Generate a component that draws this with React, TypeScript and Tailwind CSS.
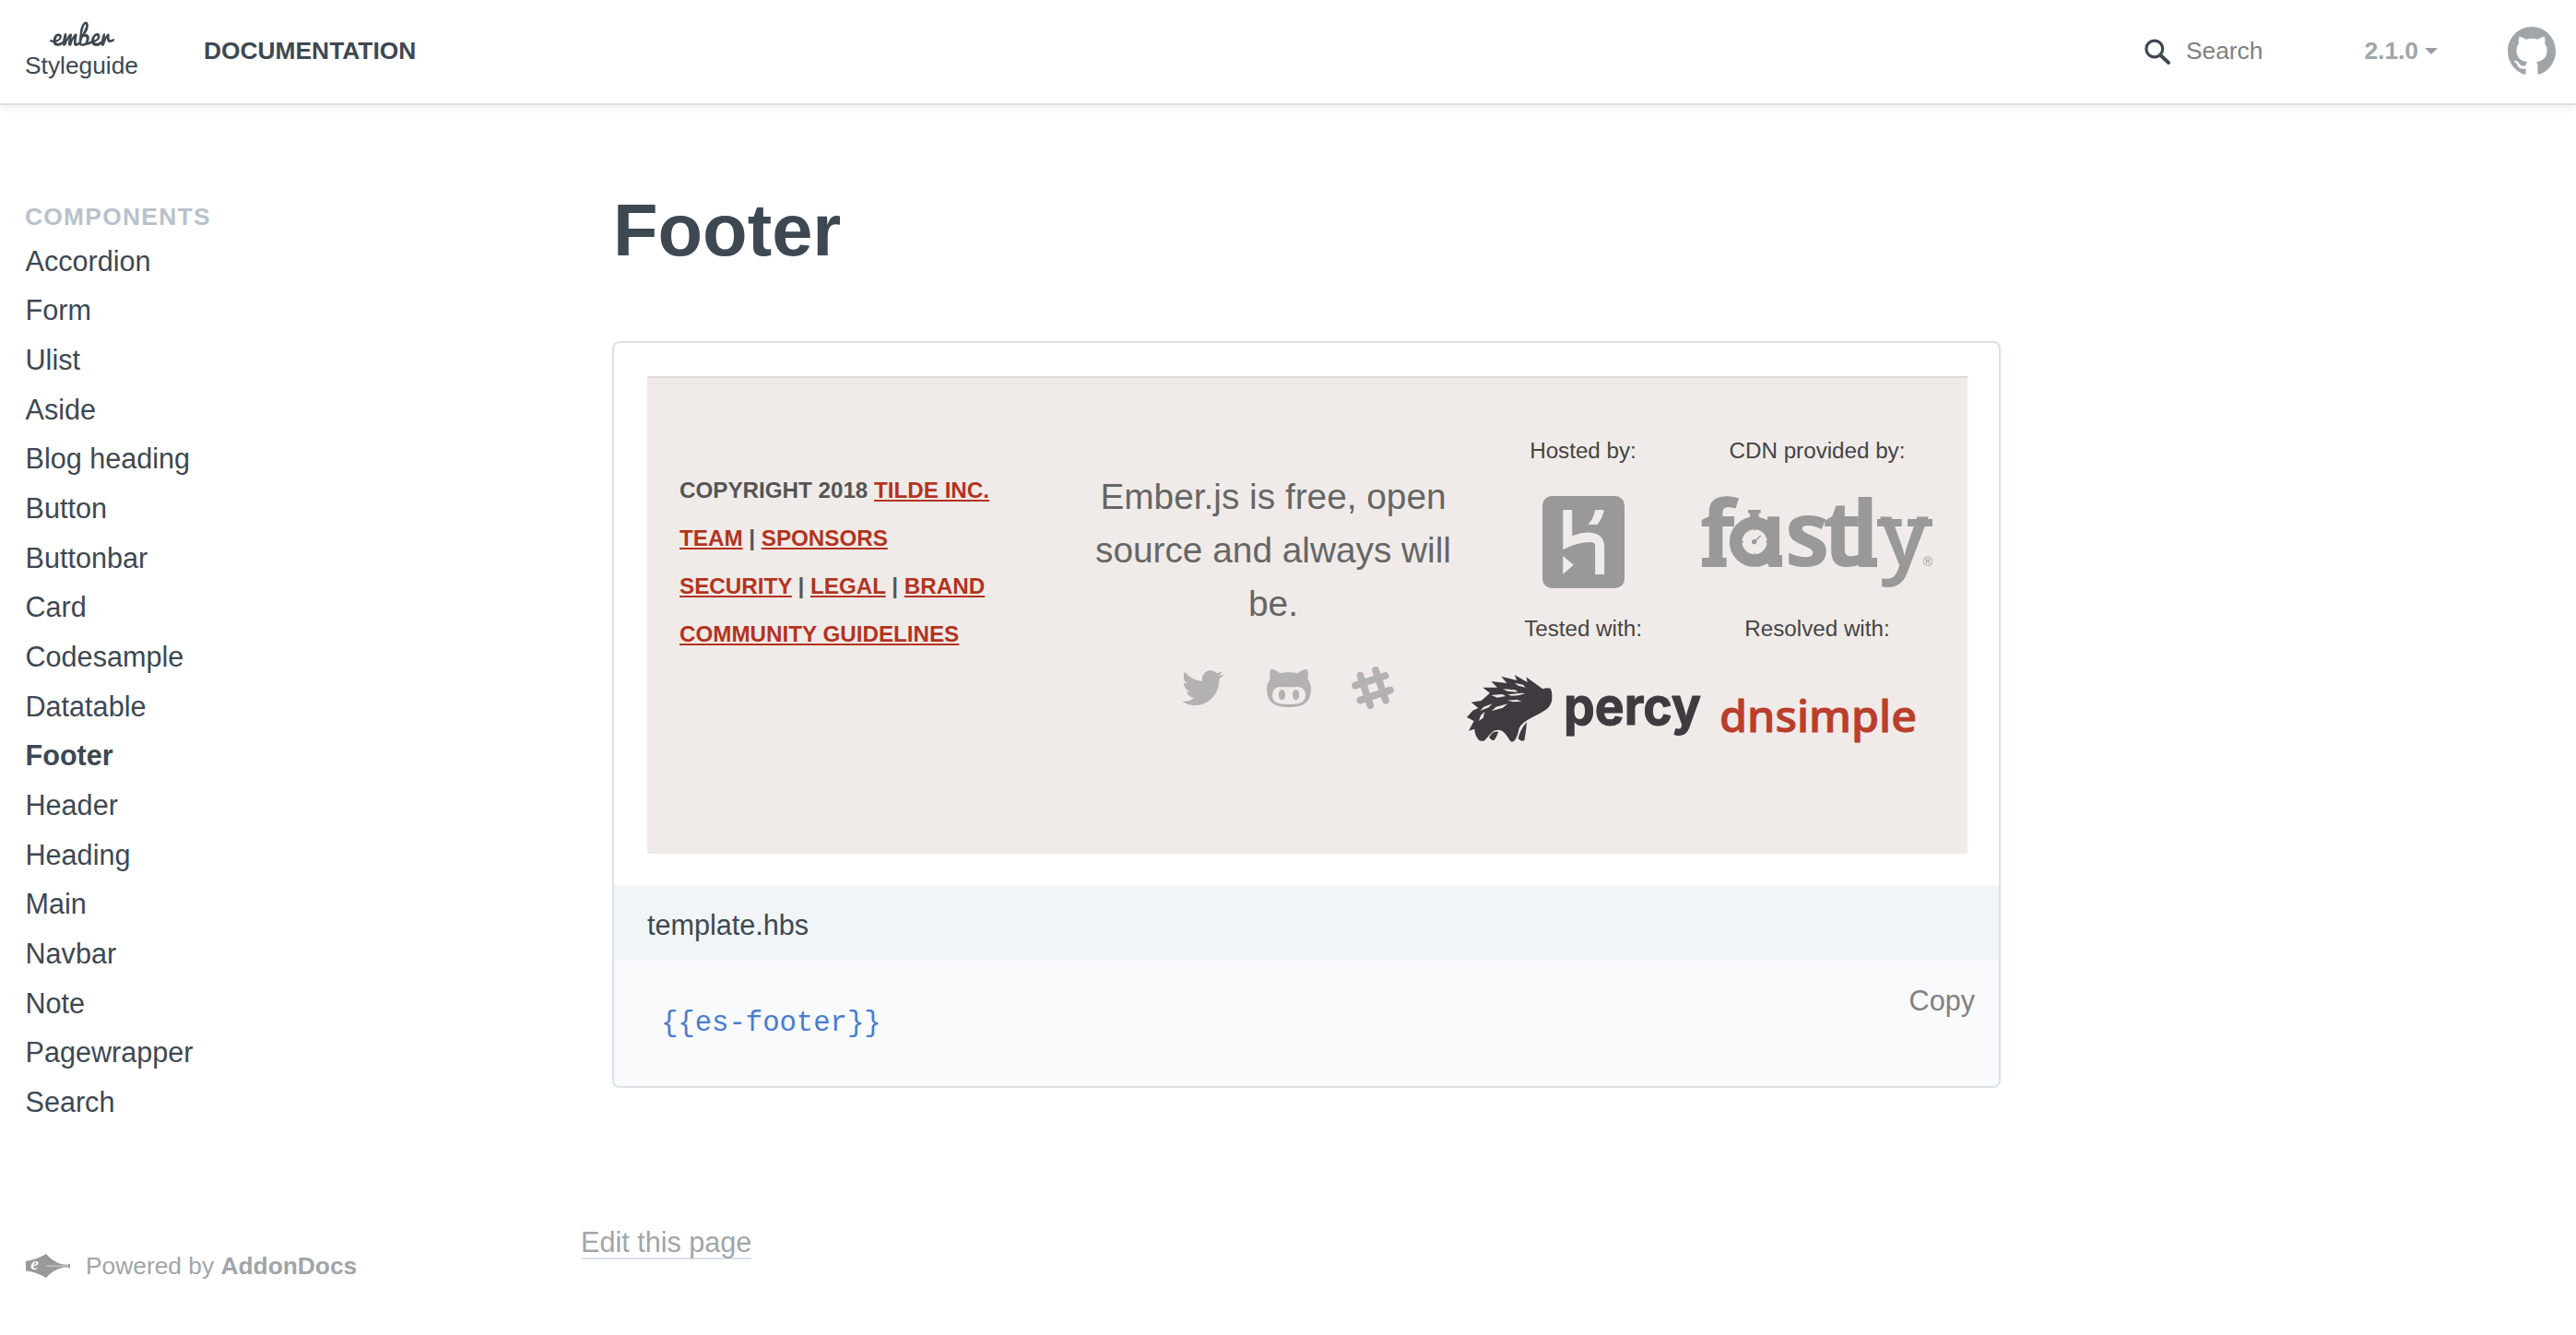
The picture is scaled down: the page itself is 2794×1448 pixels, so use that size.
import React from "react";
import { FaEmber } from "react-icons/fa";

const components = [
  "Accordion", "Form", "Ulist", "Aside", "Blog heading", "Button", "Buttonbar", "Card", "Codesample",
  "Datatable", "Footer", "Header", "Heading", "Main", "Navbar", "Note", "Pagewrapper", "Search",
];

function GithubMark() {
  return (
    <svg viewBox="0 0 16 16" className="h-[53px] w-[52px] fill-[#a0a5aa]" preserveAspectRatio="none">
      <path d="M8 0C3.58 0 0 3.58 0 8c0 3.54 2.29 6.53 5.47 7.59.4.07.55-.17.55-.38 0-.19-.01-.82-.01-1.49-2.01.37-2.53-.49-2.69-.94-.09-.23-.48-.94-.82-1.13-.28-.15-.68-.52-.01-.53.63-.01 1.08.58 1.23.82.72 1.21 1.87.87 2.33.66.07-.52.28-.87.51-1.07-1.78-.2-3.64-.89-3.64-3.95 0-.87.31-1.59.82-2.15-.08-.2-.36-1.02.08-2.12 0 0 .67-.21 2.2.82.64-.18 1.32-.27 2-.27.68 0 1.36.09 2 .27 1.53-1.04 2.2-.82 2.2-.82.44 1.1.16 1.92.08 2.12.51.56.82 1.27.82 2.15 0 3.07-1.87 3.75-3.65 3.95.29.25.54.73.54 1.48 0 1.07-.01 1.93-.01 2.2 0 .21.15.46.55.38A8.013 8.013 0 0016 8c0-4.42-3.58-8-8-8z" />
    </svg>
  );
}

function Header() {
  return (
    <header className="flex h-[114px] items-center border-b-2 border-[#dae1e7] pr-[22px] pb-0.5 pl-[27px] text-[26.35px] leading-[30px] text-[#3d4852] shadow-[0_4px_8px_rgba(0,0,0,0.05)]">
      <div className="flex flex-col items-center">
        <div className="flex h-[26px] w-[70px] items-start justify-center">
          <FaEmber className="-mt-2.5 h-14 w-[70px] shrink-0" />
        </div>
        <div className="mt-[5px]">Styleguide</div>
      </div>
      <div className="ml-[71px] font-bold">DOCUMENTATION</div>
      <div className="ml-auto flex items-center">
        <svg viewBox="0 0 28 28" className="mt-0.5 size-7 fill-none stroke-[#3d4852]">
          <circle cx="10.8" cy="11" r="8.9" strokeWidth="3.2" />
          <path d="M17 17.5 26 26" strokeWidth="3.8" strokeLinecap="round" />
        </svg>
        <div className="ml-[17px] text-[#808080]">Search</div>
        <div className="ml-[110px] font-bold text-[#a0a5aa]">2.1.0</div>
        <svg viewBox="0 0 14 7" className="ml-[7px] h-[7px] w-3.5 fill-[#999ca1]">
          <path d="M0 0H14L7 7Z" />
        </svg>
        <div className="ml-[76px]"><GithubMark /></div>
      </div>
    </header>
  );
}

function Sidebar() {
  return (
    <aside className="w-[630px] shrink-0 pt-[103px] pl-[27px] text-[#3d4852]">
      <div className="text-[26.35px] leading-9 font-bold tracking-[1.3px] text-[#b8c2cc]">COMPONENTS</div>
      <ul className="mt-[3.6px] pl-[0.5px] text-[30.6px] leading-[53.67px]">
        {components.map((name) => (
          <li key={name} className={name === "Footer" ? "font-bold" : ""}>{name}</li>
        ))}
      </ul>
      <div className="mt-[135px] flex h-[30px] items-center pl-px text-[26.35px] leading-[30px] text-[#a0a5aa]">
        <svg viewBox="24 41 144 79" className="mr-[17px] h-[26px] w-12" preserveAspectRatio="none">
          <path d="M24 65Q60 60 90 41Q112 68 145 76L162 77L163 74H168V88H163L162 85L145 86Q112 94 90 120Q60 100 24 97Z" className="fill-[#999999]" />
          <path d="M91 81H164" className="stroke-[#d4d4d4]" strokeWidth="3" />
          <text x="40" y="94" className="fill-white font-['Liberation_Serif',serif] text-[58px] font-bold italic">e</text>
        </svg>
        <span>Powered by <b>AddonDocs</b></span>
      </div>
    </aside>
  );
}

function Link({ children }: { children: React.ReactNode }) {
  return (
    <a className="text-[#b3331d] underline decoration-2 underline-offset-[2px]">{children}</a>
  );
}

function HerokuLogo() {
  return (
    <svg viewBox="294 234 232 300" className="h-[100px] w-[89px]" preserveAspectRatio="none">
      <rect x="294" y="234" width="232" height="300" rx="26" ry="30" className="fill-[#999999]" />
      <g className="fill-[#f0ebe9]">
        <path d="M352 279H378V364C400 354 418 352 430 353C455 355 469 372 469 400V489H443V398Q443 384 430 384C400 384 372 396 352 409Z" />
        <path d="M443 279H468Q465 305 449 327H423Q440 305 443 279Z" />
        <path d="M352 429 382 458 352 488Z" />
      </g>
    </svg>
  );
}

function FastlyLogo() {
  return (
    <svg viewBox="48 57 750 300" className="h-[100px] w-[250px] overflow-visible fill-[#999999]">
      <g className="font-['Open_Sans',sans-serif] text-[294px] font-bold">
        <text x="41" y="282">f</text>
        <text x="317 441 534" y="282">stl</text>
        <text x="627" y="282" textLength="158" lengthAdjust="spacingAndGlyphs" className="font-semibold">y</text>
      </g>
      <path d="M48 255H128V285H48ZM560 255H618V285H560ZM618 129H698V153H618ZM717 129H798V153H717Z" />
      <rect x="198" y="99" width="41" height="11" />
      <path d="M204 109H233V130H204Z" />
      <circle cx="219" cy="203" r="61" className="fill-[#f0ebe9] stroke-[#999999]" strokeWidth="41" />
      <path d="M261 121H300V246H309V285H267L259 270V232Q268 203 259 174Z" />
      <circle cx="218" cy="203" r="8" />
      <path d="M218 203 239 183" className="stroke-[#999999]" strokeWidth="4" />
      <path d="M219 161V167M219 239V245M177 203H183M255 203H261" className="stroke-[#999999]" strokeWidth="4" />
      <text x="767" y="283" className="font-['Liberation_Sans',sans-serif] text-[42px]">®</text>
    </svg>
  );
}

function PercyLogo() {
  return (
    <svg viewBox="1590 700 254 110" className="h-[110px] w-[254px] overflow-visible fill-[#3f3a40]">
      <g transform="translate(1580 700) scale(.33333)">
        <path d="M305 140Q311 150 310 168Q311 190 296 205Q280 218 246 234Q210 252 203 270C200 285 196 300 188 310Q180 318 172 308C160 288 150 275 135 275C115 275 105 295 92 308Q80 316 70 306Q58 290 58 272L39 278L56 246L33 234L52 212L70 204L47 185L80 180L108 155L85 137L132 137L112 117L163 123L145 101L196 114L188 96L230 120L226 103L280 142Q292 137 305 140Z" />
        <path d="M136 281C118 278 110 290 106 300Q113 311 122 308Q130 298 136 281ZM228 250C213 265 204 285 200 304Q212 315 220 309Q225 285 228 250Z" />
        <g className="fill-[#f0ebe9]">
          <path d="M188 122 216 128 224 137 200 131ZM150 142 190 145 200 152 165 149ZM112 162 148 159 160 165 132 170ZM166 160 212 155 222 157 200 163 178 164ZM164 179 196 177 212 182 184 184ZM76 213 88 200 116 190 104 202ZM114 213 128 200 166 190 150 203ZM72 246 78 228 91 216 86 236Z" />
        </g>
      </g>
      <text x="1696" y="785.5" textLength="149" lengthAdjust="spacingAndGlyphs" className="stroke-[#3f3a40] font-['Inter',sans-serif] text-[56px] font-bold" strokeLinejoin="round">percy</text>
    </svg>
  );
}

function DnsimpleLogo() {
  return (
    <svg viewBox="1844 700 254 110" className="h-[110px] w-[254px] overflow-visible">
      <text x="1865" y="793.5" textLength="214" lengthAdjust="spacingAndGlyphs" className="fill-[#ba3e2b] stroke-[#ba3e2b] font-['Noto_Sans',sans-serif] text-[47px] font-medium" strokeWidth="1" strokeLinejoin="round">dnsimple</text>
    </svg>
  );
}

function SocialIcons() {
  return (
    <div className="mt-[38px] ml-[110px] flex h-12 items-center fill-[#b3b1b2]">
      <svg viewBox="0 0 24 19.5" className="h-[38px] w-[45px]" preserveAspectRatio="none">
        <path transform="translate(0 -2.2)" d="M23.953 4.57a10 10 0 01-2.825.775 4.958 4.958 0 002.163-2.723c-.951.555-2.005.959-3.127 1.184a4.92 4.92 0 00-8.384 4.482C7.69 8.095 4.067 6.13 1.64 3.162a4.822 4.822 0 00-.666 2.475c0 1.71.87 3.213 2.188 4.096a4.904 4.904 0 01-2.228-.616v.06a4.923 4.923 0 003.946 4.827 4.996 4.996 0 01-2.212.085 4.936 4.936 0 004.604 3.417 9.867 9.867 0 01-6.102 2.105c-.39 0-.779-.023-1.17-.067a13.995 13.995 0 007.557 2.209c9.053 0 13.998-7.496 13.998-13.985 0-.21 0-.42-.015-.63A9.935 9.935 0 0024 4.59z" />
      </svg>
      <svg viewBox="0 2 16 13" className="ml-[47px] h-[41px] w-12" preserveAspectRatio="none">
        <path d="M14.7 5.34c.13-.32.55-1.59-.13-3.31 0 0-1.05-.33-3.44 1.3-1-.28-2.07-.32-3.13-.32s-2.13.04-3.13.32c-2.39-1.64-3.44-1.3-3.44-1.3-.68 1.72-.26 2.99-.13 3.31C.49 6.21 0 7.33 0 8.69 0 13.84 3.33 15 7.98 15S16 13.84 16 8.69c0-1.36-.49-2.48-1.3-3.35zM8 14.02c-3.3 0-5.98-.15-5.98-3.35 0-.76.38-1.48 1.02-2.07 1.07-.98 2.9-.46 4.96-.46 2.07 0 3.88-.52 4.96.46.65.59 1.02 1.3 1.02 2.07 0 3.19-2.68 3.35-5.98 3.35zM5.49 9.01c-.66 0-1.2.8-1.2 1.78s.54 1.79 1.2 1.79c.66 0 1.2-.8 1.2-1.79s-.54-1.78-1.2-1.78zm5.02 0c-.66 0-1.2.79-1.2 1.78s.54 1.79 1.2 1.79c.66 0 1.2-.8 1.2-1.79s-.53-1.78-1.2-1.78z" />
      </svg>
      <svg viewBox="918 669 138 137" className="ml-11 size-[46px] fill-none stroke-[#b3b1b2]" strokeWidth="23" strokeLinecap="round">
        <path d="M946 697 979 795M996 680 1029 779M930 730 1028 698M946 778 1044 745" />
      </svg>
    </div>
  );
}

function EsFooter() {
  return (
    <div className="flex h-[518px] border-t-2 border-[#e0dad7] bg-[#f0ebe9] px-[35px]">
      <div className="w-[435px] pt-24 text-[24.2px] leading-[51.9px] font-bold text-[#555555]">
        <p>COPYRIGHT 2018 <Link>TILDE INC.</Link></p>
        <p><Link>TEAM</Link> | <Link>SPONSORS</Link></p>
        <p><Link>SECURITY</Link> | <Link>LEGAL</Link> | <Link>BRAND</Link></p>
        <p><Link>COMMUNITY GUIDELINES</Link></p>
      </div>
      <div className="w-[418px] pt-[100px]">
        <p className="text-center text-[38.8px] leading-[58px] text-[#666666]">
          Ember.js is free, open<br />source and always will<br />be.
        </p>
        <SocialIcons />
      </div>
      <div className="grid w-[508px] grid-cols-2 content-start justify-items-center pt-[61px] text-[24.2px] leading-9 text-[#444444]">
        <div>Hosted by:</div>
        <div>CDN provided by:</div>
        <div className="mt-[31px] mb-[26px]"><HerokuLogo /></div>
        <div className="mt-[32px] mb-[25px]"><FastlyLogo /></div>
        <div>Tested with:</div>
        <div>Resolved with:</div>
        <PercyLogo />
        <DnsimpleLogo />
      </div>
    </div>
  );
}

export default function App() {
  return (
    <div className="min-h-[1448px] bg-white font-['Liberation_Sans',Arial,sans-serif]">
      <Header />
      <div className="flex">
        <Sidebar />
        <main className="w-[1540px] pt-[88px] text-[30.6px] text-[#3d4852]">
          <div className="pl-[34px]">
            <h1 className="pl-px text-[79.5px] leading-[96px] font-bold">Footer</h1>
            <section className="mt-[72px] h-[810px] w-[1506px] overflow-hidden rounded-lg border-2 border-[#dae1e7]">
              <div className="pt-9 pr-[34px] pb-[34px] pl-9">
                <EsFooter />
              </div>
              <div className="h-[82px] bg-[#f1f5f8] pt-[5px] pl-9 leading-[77px]">template.hbs</div>
              <div className="flex h-[136px] justify-between bg-[#f8fafc] pr-[26px] pl-[51px] leading-10">
                <code className="pt-12 font-['Liberation_Mono',monospace] text-[#4a7bd0]">{"{{es-footer}}"}</code>
                <span className="pt-[23px] text-[#808080]">Copy</span>
              </div>
            </section>
          </div>
          <a className="mt-[150px] inline-block border-b-2 border-[#dae1e7] leading-[34px] text-[#a0a5aa]">Edit this page</a>
        </main>
      </div>
    </div>
  );
}
